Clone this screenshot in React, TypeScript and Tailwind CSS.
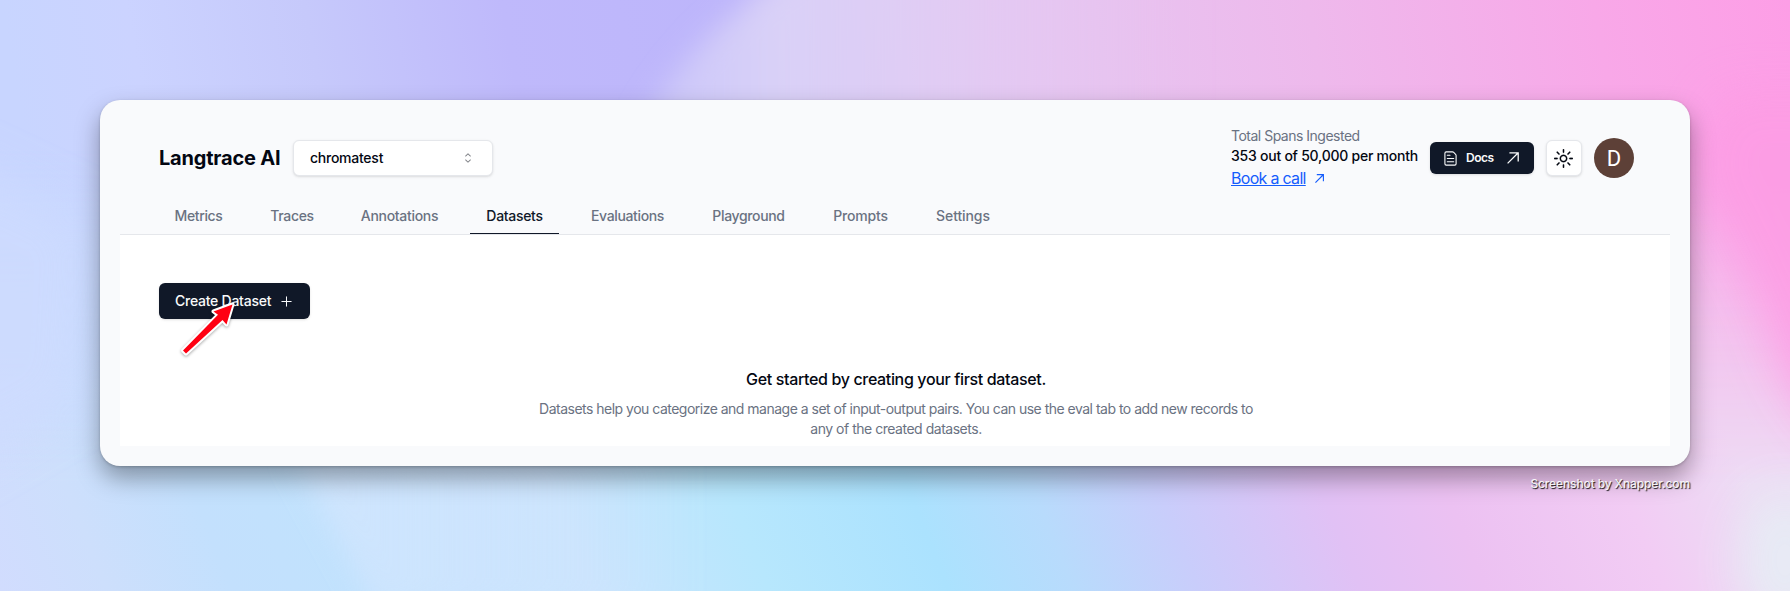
import React from "react";
import { RxCaretSort, RxPlus, RxSun } from "react-icons/rx";

function Backdrop() {
  return (
    <svg className="absolute inset-0 h-full w-full" viewBox="0 0 1790 591" preserveAspectRatio="none" aria-hidden="true">
      <defs>
        <linearGradient id="top" gradientUnits="userSpaceOnUse" x1="0" y1="0" x2="1790" y2="0" gradientTransform="skewX(10)">
          <stop offset="0" stopColor="#c8d5ff" />
          <stop offset="0.07" stopColor="#cbd3ff" />
          <stop offset="0.17" stopColor="#c6c9fb" />
          <stop offset="0.28" stopColor="#bfb9fb" />
          <stop offset="0.41" stopColor="#bdb5fb" />
          <stop offset="0.5" stopColor="#dccbf6" />
          <stop offset="0.55" stopColor="#e4c8f2" />
          <stop offset="0.73" stopColor="#eeb9ec" />
          <stop offset="0.89" stopColor="#f8a8e8" />
          <stop offset="1" stopColor="#fd9ee6" />
        </linearGradient>
        <linearGradient id="bottom" gradientUnits="userSpaceOnUse" x1="0" y1="0" x2="1790" y2="0" gradientTransform="translate(-236 0) skewX(21.8)">
          <stop offset="0" stopColor="#d1dcfe" />
          <stop offset="0.06" stopColor="#cddffc" />
          <stop offset="0.13" stopColor="#c3e0fd" />
          <stop offset="0.2" stopColor="#c1e2fd" />
          <stop offset="0.33" stopColor="#cae4fd" />
          <stop offset="0.43" stopColor="#b7e7fd" />
          <stop offset="0.53" stopColor="#abe2fe" />
          <stop offset="0.6" stopColor="#b8dbfc" />
          <stop offset="0.67" stopColor="#c9cdfb" />
          <stop offset="0.76" stopColor="#e1c1f5" />
          <stop offset="0.83" stopColor="#ecc1f2" />
          <stop offset="0.93" stopColor="#f2ccf4" />
          <stop offset="1" stopColor="#eddcf4" />
        </linearGradient>
        <linearGradient id="fade" x2="0" y2="1">
          <stop offset="0.25" stopColor="#000" />
          <stop offset="0.82" stopColor="#fff" />
        </linearGradient>
        <linearGradient id="glow">
          <stop offset="0" stopColor="#cdcaf9" stopOpacity="0.8" />
          <stop offset="0.25" stopColor="#dcd4f7" stopOpacity="0.9" />
          <stop offset="0.6" stopColor="#e3cbf3" stopOpacity="0.6" />
          <stop offset="1" stopColor="#e8c2f0" stopOpacity="0" />
        </linearGradient>
        <linearGradient id="sheen">
          <stop offset="0" stopColor="#d8e7fe" />
          <stop offset="1" stopColor="#d8e7fe" stopOpacity="0" />
        </linearGradient>
        <mask id="lower"><rect width="1790" height="591" fill="url(#fade)" /></mask>
        <filter id="soft" x="-50%" y="-50%" width="200%" height="200%"><feGaussianBlur stdDeviation="24" /></filter>
        <filter id="edge" x="-50%" y="-50%" width="200%" height="200%"><feGaussianBlur stdDeviation="14" /></filter>
      </defs>
      <rect width="1790" height="591" fill="url(#top)" />
      <path d="M810 -40 Q690 30 640 130 H1200 V-40Z" fill="url(#glow)" filter="url(#edge)" />
      <rect width="1790" height="591" fill="url(#bottom)" mask="url(#lower)" />
      <path d="M-60 150 L90 220 L80 400 L-60 480Z" fill="#cfdcff" opacity=".7" filter="url(#soft)" />
      <path d="M1720 90 H1850 V450 Q1795 420 1765 320 Q1735 250 1690 170Z" fill="#fd9de4" opacity=".9" filter="url(#soft)" />
      <ellipse cx="1785" cy="560" rx="45" ry="70" fill="#e6eef5" opacity=".85" filter="url(#soft)" />
      <path d="M290 450 L375 610 H700 V450Z" fill="url(#sheen)" opacity=".65" filter="url(#edge)" />
    </svg>
  );
}

function ArrowUpRight({ className, strokeWidth }: { className: string; strokeWidth: number }) {
  return (
    <svg className={className} viewBox="0 0 12 12" fill="none" stroke="currentColor" strokeWidth={strokeWidth} aria-hidden="true">
      <path d="M0.6 11.4 L11 1 M2.4 0.8 H11.2 V9.6" />
    </svg>
  );
}

function DocumentIcon() {
  return (
    <svg className="h-[15px] w-[13px]" viewBox="0 0 13 15" fill="none" stroke="currentColor" strokeWidth="1.1" strokeLinecap="round" strokeLinejoin="round" aria-hidden="true">
      <path d="M8.5 0.9 H2.2 Q0.9 0.9 0.9 2.2 V12.8 Q0.9 14.1 2.2 14.1 H10.8 Q12.1 14.1 12.1 12.8 V4.5 Q12.1 3.8 11.6 3.3 L9.7 1.4 Q9.2 0.9 8.5 0.9Z" />
      <path d="M3.3 4.3 H6 M3.3 7.5 H9.7 M3.3 10.7 H9.7" />
    </svg>
  );
}

const tabs = [
  { label: "Metrics", width: "w-[80px]", tracking: "tracking-[-0.35px]", pad: "pl-[1px]" },
  { label: "Traces", width: "w-[74px]", tracking: "tracking-[-0.33px]", pad: "pl-[2px]" },
  { label: "Annotations", width: "w-[110px]", tracking: "tracking-[-0.31px]", pad: "pl-[1px]" },
  { label: "Datasets", width: "w-[89px]", tracking: "tracking-[-0.31px]", pad: "", active: true },
  { label: "Evaluations", width: "w-[105px]", tracking: "tracking-[-0.35px]", pad: "" },
  { label: "Playground", width: "w-[105px]", tracking: "tracking-[-0.35px]", pad: "" },
  { label: "Prompts", width: "w-[87px]", tracking: "tracking-[-0.2px]", pad: "" },
  { label: "Settings", width: "w-[86px]", tracking: "tracking-[-0.1px]", pad: "" },
];

function Header() {
  return (
    <header className="flex h-[88px] items-center justify-between pl-[39px] pr-9 pt-[28px]">
      <div className="flex items-center">
        <h1 className="w-[134px] whitespace-nowrap text-xl font-bold tracking-[-0.2px] text-gray-950">Langtrace AI</h1>
        <button className="flex h-9 w-[200px] items-center justify-between rounded-md border border-gray-200 bg-white pl-4 pr-4 text-sm font-medium tracking-[-0.25px] text-gray-950 shadow-sm">
          chromatest
          <RxCaretSort className="h-4 w-4 opacity-50" />
        </button>
      </div>
      <div className="flex items-center">
        <div className="flex w-[199px] flex-col whitespace-nowrap">
          <p className="text-sm leading-5 tracking-[-0.5px] text-gray-500">Total Spans Ingested</p>
          <p className="text-sm font-medium leading-5 tracking-[-0.24px] text-gray-950">353 out of 50,000 per month</p>
          <a className="flex items-center gap-[9px] text-base leading-6 tracking-[-0.7px] text-blue-600">
            <span className="underline">Book a call</span>
            <ArrowUpRight className="h-[9px] w-[9px]" strokeWidth={1.5} />
          </a>
        </div>
        <button className="flex h-8 w-[104px] items-center rounded-md bg-gray-900 pl-[14px] text-xs font-semibold tracking-[-0.45px] text-gray-50 shadow">
          <DocumentIcon />
          <span className="ml-[9px] w-[41px] text-left">Docs</span>
          <ArrowUpRight className="h-3 w-3" strokeWidth={1.3} />
        </button>
        <button className="ml-3 flex h-9 w-9 items-center justify-center rounded-md border border-gray-200 bg-white pr-px text-gray-950 shadow-sm">
          <RxSun className="h-[19px] w-[19px] stroke-current [stroke-width:0.2]" />
        </button>
        <div className="ml-3 flex h-10 w-10 items-center justify-center rounded-full bg-[#5d4037] font-['Roboto',sans-serif] text-[22px] text-white">D</div>
      </div>
    </header>
  );
}

function PointerArrow() {
  return (
    <svg className="absolute left-[55px] top-[63px] h-[64px] w-[66px] drop-shadow-[0_1px_1.5px_rgba(0,0,0,0.35)]" viewBox="0 0 66 64" aria-hidden="true">
      <path d="M57.5 6.5 L38.5 13.5 L43 16.8 L8 52.5 L11 55.5 L47.5 22 L51.5 26.5Z" fill="#ff0012" stroke="#fff" strokeWidth="4" strokeLinejoin="round" paintOrder="stroke" />
    </svg>
  );
}

export default function App() {
  return (
    <div className="relative h-[591px] w-full overflow-hidden font-['Inter',sans-serif]">
      <Backdrop />
      <div className="relative flex flex-col items-end px-[100px] pt-[100px]">
        <main className="h-[366px] w-full rounded-[20px] bg-[#f9fafc] px-5 shadow-[0_12px_25px_rgba(0,0,0,0.35),0_1px_3px_rgba(0,0,0,0.2)]">
          <Header />
          <nav className="flex h-[47px] gap-4 border-b border-gray-200 px-[38px] pt-[12px]">
            {tabs.map((tab) => (
              <a
                key={tab.label}
                className={`flex h-[34px] shrink-0 items-center justify-center whitespace-nowrap pb-[1px] text-sm font-medium ${tab.width} ${tab.tracking} ${tab.pad} ${tab.active ? "border-b border-gray-900 text-gray-900" : "border-b border-transparent text-gray-500"}`}
              >
                {tab.label}
              </a>
            ))}
          </nav>
          <section className="relative h-[211px] bg-white px-[39px] pt-12">
            <button className="flex h-9 w-[151px] items-center justify-between whitespace-nowrap rounded-md bg-gray-900 px-4 text-sm font-medium tracking-[-0.25px] text-gray-50 shadow">
              Create Dataset
              <RxPlus className="h-[15px] w-[15px]" />
            </button>
            <div className="flex flex-col items-center pl-[2px] pt-[48px] text-center">
              <h2 className="text-base font-medium leading-6 tracking-[-0.35px] text-gray-950">Get started by creating your first dataset.</h2>
              <p className="mt-2 whitespace-nowrap text-sm leading-5 tracking-[-0.51px] text-gray-500">
                Datasets help you categorize and manage a set of input-output pairs. You can use the eval tab to add new records to
                <br />
                <span className="tracking-[-0.48px]">any of the created datasets.</span>
              </p>
            </div>
            <PointerArrow />
          </section>
        </main>
        <p className="mt-[9px] whitespace-nowrap text-xs font-medium leading-[18px] tracking-[-0.12px] text-white/90 [text-shadow:1px_1px_1px_rgba(0,0,0,0.9)]">Screenshot by Xnapper.com</p>
      </div>
    </div>
  );
}
